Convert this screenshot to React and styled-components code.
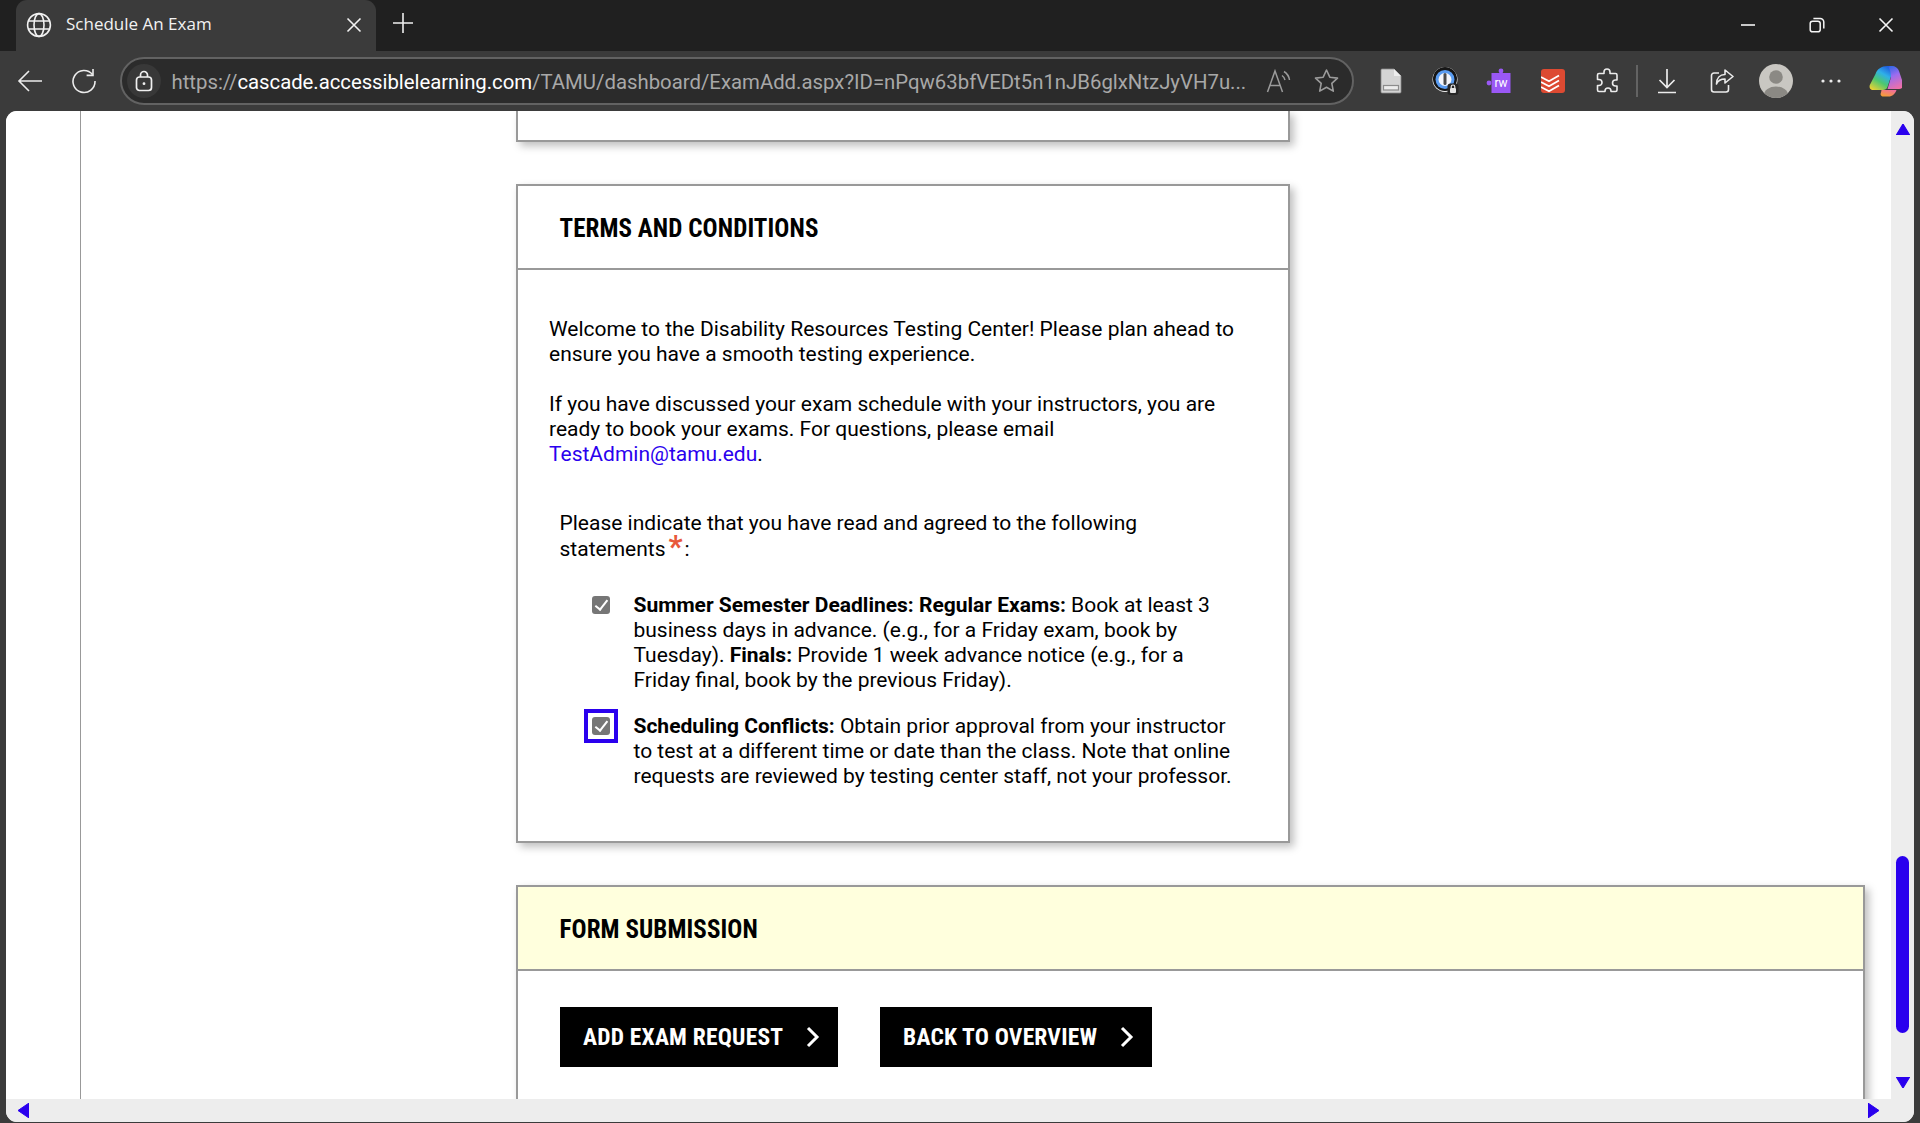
import React from "react";
import styled, { createGlobalStyle } from "styled-components";

const Global = createGlobalStyle`
  html, body {
    margin: 0;
    height: 100%;
    overflow: hidden;
    background: #3b3b3b;
  }
  #root {
    height: 100%;
  }
`;

const BLUE = "#2a00ee";

const Window = styled.div`
  display: flex;
  flex-direction: column;
  width: 1920px;
  height: 1123px;
  background: #3b3b3b;
  font-family: "Roboto", "Liberation Sans", sans-serif;
`;

/* ---------- browser chrome ---------- */

const TabStrip = styled.div`
  display: flex;
  align-items: flex-end;
  height: 51px;
  padding-left: 16px;
  background: #202020;
  flex: none;
`;

const Tab = styled.div`
  display: flex;
  align-items: center;
  width: 360px;
  height: 51px;
  box-sizing: border-box;
  padding: 0 14px 2px 10px;
  background: #3b3b3b;
  border-radius: 11px 11px 0 0;
  color: #f2f2f2;
`;

const TabTitle = styled.span`
  flex: 1;
  margin-left: 14px;
  padding-bottom: 2px;
  font-family: "Open Sans", sans-serif;
  font-size: 17px;
`;

const NewTab = styled.div`
  display: flex;
  margin-left: 16px;
  margin-bottom: 17px;
  color: #eee;
`;

const WindowControls = styled.div`
  display: flex;
  margin-left: auto;
  align-self: stretch;
  align-items: center;
  padding-bottom: 2px;
`;

const WindowButton = styled.div`
  display: flex;
  justify-content: center;
  width: 69px;
  color: #f5f5f5;
`;

const Toolbar = styled.div`
  display: flex;
  align-items: center;
  height: 60px;
  padding-left: 3px;
  flex: none;
  box-sizing: border-box;
`;

const ToolIcon = styled.div`
  display: flex;
  align-items: center;
  justify-content: center;
  width: ${(p) => p.$w || 54}px;
  height: 40px;
  flex: none;
  color: #ececec;
`;

const UrlBar = styled.div`
  display: flex;
  align-items: center;
  width: 1234px;
  height: 48px;
  margin-left: 9px;
  margin-right: 10px;
  box-sizing: border-box;
  border: 2px solid #626262;
  border-radius: 24px;
  background: #2b2b2b;
  flex: none;
`;

const LockBadge = styled.div`
  display: flex;
  align-items: center;
  justify-content: center;
  width: 34px;
  height: 34px;
  margin-left: 5px;
  border-radius: 50%;
  background: #383838;
  color: #f0f0f0;
  flex: none;
`;

const UrlText = styled.div`
  margin-left: 10.5px;
  padding-top: 1px;
  width: 1082.5px;
  font-size: 20.35px;
  color: #a8a8a8;
  white-space: nowrap;
  overflow: hidden;
  b {
    font-weight: 400;
    color: #fff;
    letter-spacing: -0.04px;
  }
`;

const UrlAction = styled.div`
  display: flex;
  align-items: center;
  justify-content: center;
  width: 48px;
  flex: none;
  color: #9b9b9b;
`;

const Divider = styled.div`
  width: 2px;
  height: 32px;
  margin: 0 2px;
  background: #636363;
  flex: none;
`;

/* ---------- page viewport ---------- */

const Viewport = styled.div`
  display: grid;
  grid-template-columns: 1885px 23px;
  grid-template-rows: 988px 23px;
  margin: 0 6px 1px;
  border-radius: 11px;
  overflow: hidden;
  background: #ededed;
  flex: none;
`;

const Page = styled.div`
  display: flex;
  background: #fff;
  overflow: hidden;
`;

const Rail = styled.div`
  width: 74px;
  height: 100%;
  border-right: 1px solid #999;
  flex: none;
`;

const Content = styled.div`
  display: flex;
  flex-direction: column;
  padding-left: 435px;
  flex: none;
`;

const Card = styled.section`
  width: ${(p) => p.$w}px;
  box-sizing: border-box;
  border: 2px solid #999;
  background: #fff;
  box-shadow: 4px 4px 8px rgba(0, 0, 0, 0.25);
  flex: none;
`;

const StubCard = styled(Card)`
  height: 31px;
  border-top: none;
  margin-bottom: 42px;
`;

const CardHeader = styled.header`
  display: flex;
  align-items: center;
  height: 84px;
  padding-left: 41.5px;
  padding-top: 2px;
  box-sizing: border-box;
  border-bottom: 2px solid #999;
  background: ${(p) => p.$bg || "#fff"};
`;

const CardTitle = styled.h2`
  margin: 0;
  font-size: 25px;
  font-weight: 700;
  font-stretch: 85%;
  letter-spacing: 0.08px;
  color: #000;
`;

const TermsBody = styled.div`
  padding: 47px 30px 52px 31px;
  font-size: 21px;
  line-height: 25px;
  color: #000;
`;

const Paragraph = styled.p`
  margin: 0 0 25px;
`;

const Link = styled.a`
  color: ${BLUE};
  text-decoration: none;
`;

const Prompt = styled.p`
  width: 640px;
  margin: 43px 0 31px 10.5px;
  line-height: 26px;
`;

const Asterisk = styled.span`
  color: #e8593a;
  font-size: 31px;
  line-height: 20px;
  font-weight: 700;
  margin: 0 2px 0 3px;
  vertical-align: -1px;
`;

const Statement = styled.div`
  display: flex;
  align-items: flex-start;
  margin-left: 43px;
  margin-bottom: 21px;
  &:last-child {
    margin-bottom: 0;
  }
`;

const CheckSlot = styled.span`
  display: block;
  width: 18px;
  height: 18px;
  margin-top: 2.5px;
  margin-right: 23.5px;
  flex: none;
  outline: ${(p) => (p.$focused ? `4px solid ${BLUE}` : "none")};
  outline-offset: 4px;
`;

const Check = styled.input`
  appearance: none;
  position: relative;
  display: block;
  width: 18px;
  height: 18px;
  margin: 0;
  border-radius: 3px;
  background: #767676;
  &:checked::after {
    content: "";
    position: absolute;
    left: 6px;
    top: 1.5px;
    width: 4.5px;
    height: 11px;
    border: solid #fff;
    border-width: 0 2px 2px 0;
    transform: rotate(38deg);
  }
`;

const StatementText = styled.div`
  width: 610px;
`;

const SubmitCard = styled(Card)`
  margin-top: 42px;
`;

const SubmitBody = styled.div`
  display: flex;
  gap: 42px;
  padding: 36px 42px 40px;
`;

const BlackButton = styled.button`
  display: flex;
  align-items: center;
  justify-content: space-between;
  width: ${(p) => p.$w}px;
  height: 60px;
  padding: 0 18px 0 23px;
  box-sizing: border-box;
  border: none;
  background: #000;
  color: #fff;
  font-family: "Roboto", sans-serif;
  font-size: 23.5px;
  font-weight: 700;
  font-stretch: 85%;
  letter-spacing: 0.2px;
`;

const VScroll = styled.div`
  display: flex;
  flex-direction: column;
  align-items: center;
  padding-top: 13px;
  background: #ededed;
`;

const VThumb = styled.div`
  width: 13px;
  height: 177px;
  margin-top: 721px;
  border-radius: 7px;
  background: ${BLUE};
`;

const DownArrow = styled.div`
  margin-top: 44px;
  display: flex;
`;

const HScroll = styled.div`
  display: flex;
  align-items: center;
  justify-content: space-between;
  padding: 0 35px 0 12px;
  background: #ededed;
  grid-column: 1 / 3;
`;

/* ---------- icons ---------- */

const Globe = () => (
  <svg width="26" height="26" viewBox="0 0 26 26" fill="none" stroke="currentColor" strokeWidth="1.6">
    <circle cx="13" cy="13" r="11.4" />
    <ellipse cx="13" cy="13" rx="5" ry="11.4" />
    <path d="M2.4 9h21.2M2.4 17h21.2" />
  </svg>
);

const Close = ({ size = 16 }) => (
  <svg width={size} height={size} viewBox="0 0 16 16" fill="none" stroke="currentColor" strokeWidth="1.6">
    <path d="M1.5 1.5l13 13M14.5 1.5l-13 13" />
  </svg>
);

const PlusIcon = () => (
  <svg width="22" height="22" viewBox="0 0 22 22" fill="none" stroke="currentColor" strokeWidth="1.6">
    <path d="M11 1v20M1 11h20" />
  </svg>
);

const MinIcon = () => (
  <svg width="16" height="16" viewBox="0 0 16 16" fill="none" stroke="currentColor" strokeWidth="1.6">
    <path d="M1 8h14" />
  </svg>
);

const RestoreIcon = () => (
  <svg width="16" height="16" viewBox="0 0 16 16" fill="none" stroke="currentColor" strokeWidth="1.5">
    <rect x="1.2" y="4.2" width="10" height="10.6" rx="2.4" />
    <path d="M4.4 1.4h6.8a3.6 3.6 0 0 1 3.6 3.6v6.4" />
  </svg>
);

const BackIcon = () => (
  <svg width="26" height="24" viewBox="0 0 26 24" fill="none" stroke="currentColor" strokeWidth="1.6">
    <path d="M25 12H2M12 2L2 12l10 10" />
  </svg>
);

const RefreshIcon = () => (
  <svg width="26" height="26" viewBox="0 0 26 26" fill="none" stroke="currentColor" strokeWidth="1.6">
    <path d="M21.5 6.5A11 11 0 1 0 24 13" />
    <path d="M22 1v6.4h-6.4" />
  </svg>
);

const LockIcon = () => (
  <svg width="18" height="22" viewBox="0 0 18 22" fill="none" stroke="currentColor" strokeWidth="1.7">
    <rect x="1.5" y="7" width="15" height="13.5" rx="3" />
    <path d="M5.5 7V5a3.5 3.5 0 0 1 7 0v2" />
    <circle cx="9" cy="13.7" r="1.4" fill="currentColor" stroke="none" />
  </svg>
);

const ReadAloud = () => (
  <svg width="26" height="26" viewBox="-1 0 26 26" fill="none" stroke="currentColor" strokeWidth="1.5">
    <path d="M1.5 24L9 3l7.5 21M4 17.5h10" />
    <path d="M16 7.5a7 7 0 0 1 3 4.5M18 3.5a12 12 0 0 1 5.5 8.5" />
  </svg>
);

const StarIcon = () => (
  <svg width="26" height="26" viewBox="-0.5 0 26 26" fill="none" stroke="currentColor" strokeWidth="1.6" strokeLinejoin="round">
    <path d="M13 2l3.3 7.2 7.7.9-5.7 5.3 1.5 7.7-6.8-3.9-6.8 3.9 1.5-7.7L2 10.1l7.7-.9z" />
  </svg>
);

const PageIcon = () => (
  <svg width="22" height="26" viewBox="0 0 22 26">
    <path d="M1 2a1 1 0 0 1 1-1h12l7 7v16a1 1 0 0 1-1 1H2a1 1 0 0 1-1-1z" fill="#d4d4d4" stroke="#8a8a8a" strokeWidth="0.8" />
    <path d="M14 1l7 7h-7z" fill="#ededed" />
    <rect x="3.5" y="17.5" width="15" height="4.5" fill="#ececec" stroke="#8c8c8c" strokeWidth="1.2" />
  </svg>
);

const OnePassword = () => (
  <svg width="28" height="30" viewBox="-1.5 0 28 30">
    <circle cx="12.5" cy="13.5" r="12.5" fill="#f0f0f0" />
    <circle cx="12.5" cy="13" r="12" fill="#161616" />
    <circle cx="12.5" cy="13.5" r="9.5" fill="#5a9cf0" />
    <circle cx="12.5" cy="13.5" r="6.5" fill="#f4f6fa" />
    <rect x="11" y="7" width="3" height="12" rx="1.5" fill="#4a4a4a" />
    <rect x="15" y="17.5" width="11" height="11.5" rx="3" fill="#262626" />
    <rect x="17.5" y="22" width="6" height="5" rx="1" fill="#e4e4e4" />
    <path d="M18.7 22v-1.2a1.8 1.8 0 0 1 3.6 0V22" fill="none" stroke="#e4e4e4" strokeWidth="1.2" />
  </svg>
);

const RwIcon = () => (
  <svg width="26" height="26" viewBox="0 0 26 26">
    <rect x="5.5" y="5" width="19" height="20" fill="#9a58f5" />
    <circle cx="15" cy="3" r="2.4" fill="#9a58f5" />
    <circle cx="3" cy="15" r="2.4" fill="#9a58f5" />
    <text x="15" y="19" textAnchor="middle" fontFamily="Roboto, sans-serif" fontSize="12" fill="#fff">rw</text>
  </svg>
);

const Todoist = () => (
  <svg width="24" height="24" viewBox="0 0 24 24">
    <rect width="24" height="24" rx="3" fill="#dd4a32" />
    <path d="M0 8l8 4.3 10-5.8M0 13l8 4.3 10-5.8M0 18l8 4.3 10-5.8" fill="none" stroke="#fff" strokeWidth="1.8" />
  </svg>
);

const PuzzleIcon = () => (
  <svg width="24" height="26" viewBox="0 0 24 26" fill="none" stroke="currentColor" strokeWidth="1.6" strokeLinejoin="round">
    <path d="M9 5.5V4a3 3 0 0 1 6 0v1.5h5.5a1.5 1.5 0 0 1 1.5 1.5v5h-1.5a3 3 0 0 0 0 6H22v4a1.5 1.5 0 0 1-1.5 1.5H16V23a3 3 0 0 0-6 0v.5H4A1.5 1.5 0 0 1 2.5 22v-4.5H4a3 3 0 0 0 0-6H2.5V7A1.5 1.5 0 0 1 4 5.5z" />
  </svg>
);

const DownloadIcon = () => (
  <svg width="20" height="26" viewBox="0 0 20 26" fill="none" stroke="currentColor" strokeWidth="1.7">
    <path d="M10 1v18M2.5 12l7.5 7.5 7.5-7.5M1 24.5h18" />
  </svg>
);

const ShareIcon = () => (
  <svg width="24" height="26" viewBox="0 0 24 26" fill="none" stroke="currentColor" strokeWidth="1.6" strokeLinejoin="round">
    <path d="M9 5H4a2.5 2.5 0 0 0-2.5 2.5v14A2.5 2.5 0 0 0 4 24h12a2.5 2.5 0 0 0 2.5-2.5V17" />
    <path d="M15 2l8 6.500-8 6.500v-4c-4 0-7 1.500-8.500 5 0-6 3.500-9.500 8.500-9.500z" />
  </svg>
);

const Avatar = () => (
  <svg width="34" height="34" viewBox="0 0 34 34">
    <defs>
      <clipPath id="av">
        <circle cx="17" cy="17" r="17" />
      </clipPath>
    </defs>
    <circle cx="17" cy="17" r="17" fill="#c9c7c2" />
    <g clipPath="url(#av)" fill="#8b8984">
      <circle cx="17" cy="13" r="6.8" />
      <ellipse cx="17" cy="31" rx="12" ry="8.5" />
    </g>
  </svg>
);

const DotsIcon = () => (
  <svg width="20" height="4" viewBox="0 0 20 4" fill="currentColor">
    <circle cx="2" cy="2" r="1.6" />
    <circle cx="10" cy="2" r="1.6" />
    <circle cx="18" cy="2" r="1.6" />
  </svg>
);

const Copilot = () => (
  <svg width="34" height="32" viewBox="-1.5 0 34 32">
    <defs>
      <linearGradient id="cpA" x1="0.7" y1="0" x2="0.1" y2="1">
        <stop offset="0" stopColor="#1f5fe0" />
        <stop offset="0.3" stopColor="#2fb0e8" />
        <stop offset="0.6" stopColor="#4cc870" />
        <stop offset="1" stopColor="#f2d230" />
      </linearGradient>
      <linearGradient id="cpB" x1="0.3" y1="0" x2="0.6" y2="1">
        <stop offset="0" stopColor="#3868e8" />
        <stop offset="0.4" stopColor="#9a6cf0" />
        <stop offset="1" stopColor="#f070a8" />
      </linearGradient>
      <linearGradient id="cpC" x1="0.8" y1="0" x2="0.2" y2="1">
        <stop offset="0" stopColor="#f06ca0" />
        <stop offset="1" stopColor="#f5a030" />
      </linearGradient>
    </defs>
    <path d="M18 1h5c1 0 1.5 1 1.2 2L18 22c-.8 2.3-2.5 3-4.5 3H4c-3 0-4.5-2-3.700-5L6 9c1.500-5 6-8 12-8z" fill="url(#cpA)" />
    <path d="M21 1h1c4 0 6.500 2 7.500 5l4 12c1 3.500-1 6-4 6H18l3-10c1-3 0-9-2-12z" fill="url(#cpB)" />
    <path d="M12 25h15c-1.500 4-4 6.500-8 6.500h-5c-2.500 0-3.500-2-2.500-4z" fill="url(#cpC)" />
  </svg>
);

const Chevron = () => (
  <svg width="14" height="22" viewBox="0 0 14 22" fill="none" stroke="#fff" strokeWidth="3">
    <path d="M2 2l9 9-9 9" />
  </svg>
);

const Arrow = ({ dir, w, h }) => {
  const points = {
    up: "6,0 0,10 12,10",
    down: "0,0 12,0 6,10",
    left: "11,0 11,15 0,7.5",
    right: "0,0 0,15 11,7.5",
  }[dir];
  const box = dir === "up" || dir === "down" ? "0 0 12 10" : "0 0 11 15";
  return (
    <svg width={w} height={h} viewBox={box} style={{ display: "block" }}>
      <polygon points={points} fill={BLUE} stroke={BLUE} strokeLinejoin="round" strokeWidth="1" />
    </svg>
  );
};

export default function App() {
  return (
    <Window>
      <Global />
      <TabStrip>
        <Tab>
          <Globe />
          <TabTitle>Schedule An Exam</TabTitle>
          <Close />
        </Tab>
        <NewTab>
          <PlusIcon />
        </NewTab>
        <WindowControls>
          <WindowButton>
            <MinIcon />
          </WindowButton>
          <WindowButton>
            <RestoreIcon />
          </WindowButton>
          <WindowButton>
            <Close />
          </WindowButton>
        </WindowControls>
      </TabStrip>

      <Toolbar>
        <ToolIcon>
          <BackIcon />
        </ToolIcon>
        <ToolIcon>
          <RefreshIcon />
        </ToolIcon>
        <UrlBar>
          <LockBadge>
            <LockIcon />
          </LockBadge>
          <UrlText>
            https://<b>cascade.accessiblelearning.com</b>/TAMU/dashboard/ExamAdd.aspx?ID=nPqw63bfVEDt5n1nJB6glxNtzJyVH7u...
          </UrlText>
          <UrlAction>
            <ReadAloud />
          </UrlAction>
          <UrlAction>
            <StarIcon />
          </UrlAction>
        </UrlBar>
        <ToolIcon>
          <PageIcon />
        </ToolIcon>
        <ToolIcon>
          <OnePassword />
        </ToolIcon>
        <ToolIcon>
          <RwIcon />
        </ToolIcon>
        <ToolIcon>
          <Todoist />
        </ToolIcon>
        <ToolIcon>
          <PuzzleIcon />
        </ToolIcon>
        <Divider />
        <ToolIcon $w={54.5}>
          <DownloadIcon />
        </ToolIcon>
        <ToolIcon $w={54.5}>
          <ShareIcon />
        </ToolIcon>
        <ToolIcon $w={54.5}>
          <Avatar />
        </ToolIcon>
        <ToolIcon $w={54.5}>
          <DotsIcon />
        </ToolIcon>
        <ToolIcon $w={54.5}>
          <Copilot />
        </ToolIcon>
      </Toolbar>

      <Viewport>
        <Page>
          <Rail />
          <Content>
            <StubCard $w={774} />
            <Card $w={774}>
              <CardHeader>
                <CardTitle>TERMS AND CONDITIONS</CardTitle>
              </CardHeader>
              <TermsBody>
                <Paragraph>
                  Welcome to the Disability Resources Testing Center! Please plan ahead to ensure you have a smooth testing experience.
                </Paragraph>
                <Paragraph>
                  If you have discussed your exam schedule with your instructors, you are ready to book your exams. For questions, please email <Link>TestAdmin@tamu.edu</Link>.
                </Paragraph>
                <Prompt>
                  Please indicate that you have read and agreed to the following statements<Asterisk>*</Asterisk>:
                </Prompt>
                <Statement>
                  <CheckSlot>
                    <Check type="checkbox" defaultChecked />
                  </CheckSlot>
                  <StatementText>
                    <strong>Summer Semester Deadlines: Regular Exams:</strong> Book at least 3 business days in advance. (e.g., for a Friday exam, book by Tuesday). <strong>Finals:</strong> Provide 1 week advance notice (e.g., for a Friday final, book by the previous Friday).
                  </StatementText>
                </Statement>
                <Statement>
                  <CheckSlot $focused>
                    <Check type="checkbox" defaultChecked />
                  </CheckSlot>
                  <StatementText>
                    <strong>Scheduling Conflicts:</strong> Obtain prior approval from your instructor to test at a different time or date than the class. Note that online requests are reviewed by testing center staff, not your professor.
                  </StatementText>
                </Statement>
              </TermsBody>
            </Card>
            <SubmitCard $w={1349}>
              <CardHeader $bg="#ffffdd">
                <CardTitle>FORM SUBMISSION</CardTitle>
              </CardHeader>
              <SubmitBody>
                <BlackButton $w={278}>
                  ADD EXAM REQUEST
                  <Chevron />
                </BlackButton>
                <BlackButton $w={272}>
                  BACK TO OVERVIEW
                  <Chevron />
                </BlackButton>
              </SubmitBody>
            </SubmitCard>
          </Content>
        </Page>
        <VScroll>
          <Arrow dir="up" w={14} h={11} />
          <VThumb />
          <DownArrow>
            <Arrow dir="down" w={14} h={11} />
          </DownArrow>
        </VScroll>
        <HScroll>
          <Arrow dir="left" w={11} h={15} />
          <Arrow dir="right" w={11} h={15} />
        </HScroll>
      </Viewport>
    </Window>
  );
}
